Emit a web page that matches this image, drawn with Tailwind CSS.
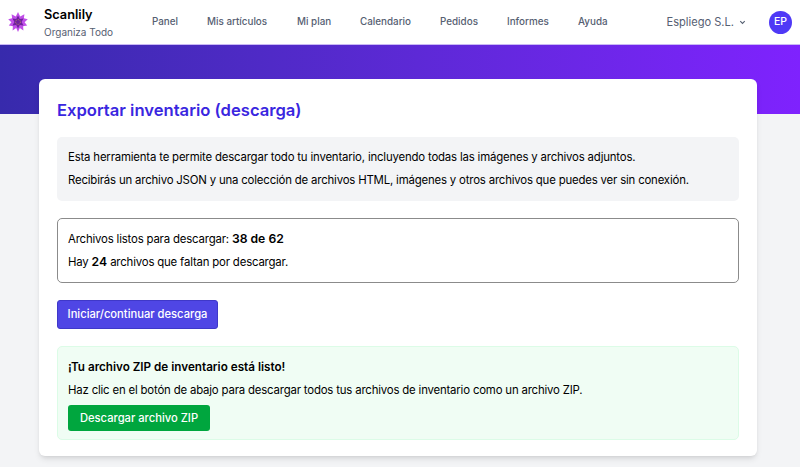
<!DOCTYPE html>
<html lang="es"><head><meta charset="utf-8">
<script src="https://cdn.jsdelivr.net/npm/@tailwindcss/browser@4"></script>
</head>
<body class="bg-[#f3f4f6] font-['Inter',sans-serif] h-[467px] overflow-hidden text-[11.4px] tracking-[-0.18px] text-black">
<header class="h-[44px] bg-white flex items-center relative z-10">
  <svg class="ml-[8px] w-[20px] h-[20px] shrink-0" viewBox="0 0 20 20">
    <polygon fill="#c04fe8" points="10,0 12.2,4.6 16.4,2.2 15.9,6.3 19.8,7.2 16.6,10.2 19.2,13.6 15.1,14.3 15.4,18.6 11.8,16 10,20 8.2,16 4.6,18.6 4.9,14.3 0.8,13.6 3.4,10.2 0.2,7.2 4.1,6.3 3.6,2.2 7.8,4.6"/>
    <polygon fill="#6f1fa0" points="10,3.5 11.8,7 15.5,6.4 13.6,10 15.5,13.6 11.8,13 10,16.5 8.2,13 4.5,13.6 6.4,10 4.5,6.4 8.2,7"/>
    <circle cx="10" cy="10" r="2.4" fill="none" stroke="#c9a04a" stroke-width="0.8" stroke-dasharray="1 1"/>
  </svg>
  <div class="ml-[16px] w-[108px] shrink-0">
    <div class="text-[12.75px] tracking-normal font-semibold leading-[18px] mb-[1px]">Scanlily</div>
    <div class="text-[10px] tracking-normal leading-[14px] text-[#566072]">Organiza Todo</div>
  </div>
  <nav class="flex text-[9.85px] tracking-normal font-medium text-[#566072] -mt-[1px]">
    <span class="w-[55px]">Panel</span><span class="w-[90px]">Mis artículos</span><span class="w-[63px]">Mi plan</span><span class="w-[80px]">Calendario</span><span class="w-[67px]">Pedidos</span><span class="w-[71px]">Informes</span><span>Ayuda</span>
  </nav>
  <div class="ml-auto flex items-center">
    <span class="text-[11.1px] tracking-normal text-[#566072]">Espliego S.L.</span>
    <svg class="ml-[4px] w-[9px] h-[9px] text-[#566072]" viewBox="0 0 20 20" fill="none" stroke="currentColor" stroke-width="2.5"><path d="M5 7l5 5 5-5"/></svg>
    <div class="ml-[22px] mr-[8px] w-[23px] h-[23px] rounded-full bg-[#4f39f6] text-white text-[10.5px] tracking-normal font-medium flex items-center justify-center">EP</div>
  </div>
</header>
<div class="h-[70px] bg-linear-to-r from-[#372aac] to-[#7f22fe] border-t border-[#c9b8f5]"></div>
<main class="-mt-[35px] ml-[39px] w-[718px] relative bg-white rounded-[6px] shadow-md h-[377px] px-[18px] pt-[19px]">
  <h1 class="text-[16.6px] tracking-normal font-semibold leading-[24px] text-[#3a26e0]">Exportar inventario (descarga)</h1>
  <section class="mt-[15px] h-[64px] bg-[#f3f4f6] rounded-[5px] px-[11px] pt-[11px]">
    <p class="leading-[18px]">Esta herramienta te permite descargar todo tu inventario, incluyendo todas las imágenes y archivos adjuntos.</p>
    <p class="leading-[18px] mt-[5px]">Recibirás un archivo JSON y una colección de archivos HTML, imágenes y otros archivos que puedes ver sin conexión.</p>
  </section>
  <section class="mt-[17px] h-[65px] border border-[#8b8b8b] rounded-[5px] px-[10px] pt-[11px]">
    <p class="leading-[18px]">Archivos listos para descargar: <b class="font-semibold text-[12.2px] tracking-normal">38 de 62</b></p>
    <p class="leading-[18px] mt-[5px]">Hay <b class="font-semibold text-[12.2px] tracking-normal">24</b> archivos que faltan por descargar.</p>
  </section>
  <button class="mt-[17px] block w-[161px] h-[29px] bg-[#4f46e5] border border-[#3f38c9] text-white text-[11.2px] tracking-normal font-medium rounded-[3px]">Iniciar/continuar descarga</button>
  <section class="mt-[17px] h-[94px] bg-[#f0fdf4] border border-[#dcfce7] rounded-[5px] px-[10px] pt-[11px]">
    <p class="font-semibold text-[11.7px] tracking-normal leading-[18px]">¡Tu archivo ZIP de inventario está listo!</p>
    <p class="leading-[18px] mt-[5px]">Haz clic en el botón de abajo para descargar todos tus archivos de inventario como un archivo ZIP.</p>
    <button class="mt-[6px] block w-[142px] h-[26px] bg-[#00a63e] text-white text-[11.2px] tracking-normal font-medium rounded-[3px]">Descargar archivo ZIP</button>
  </section>
</main>
</body></html>
